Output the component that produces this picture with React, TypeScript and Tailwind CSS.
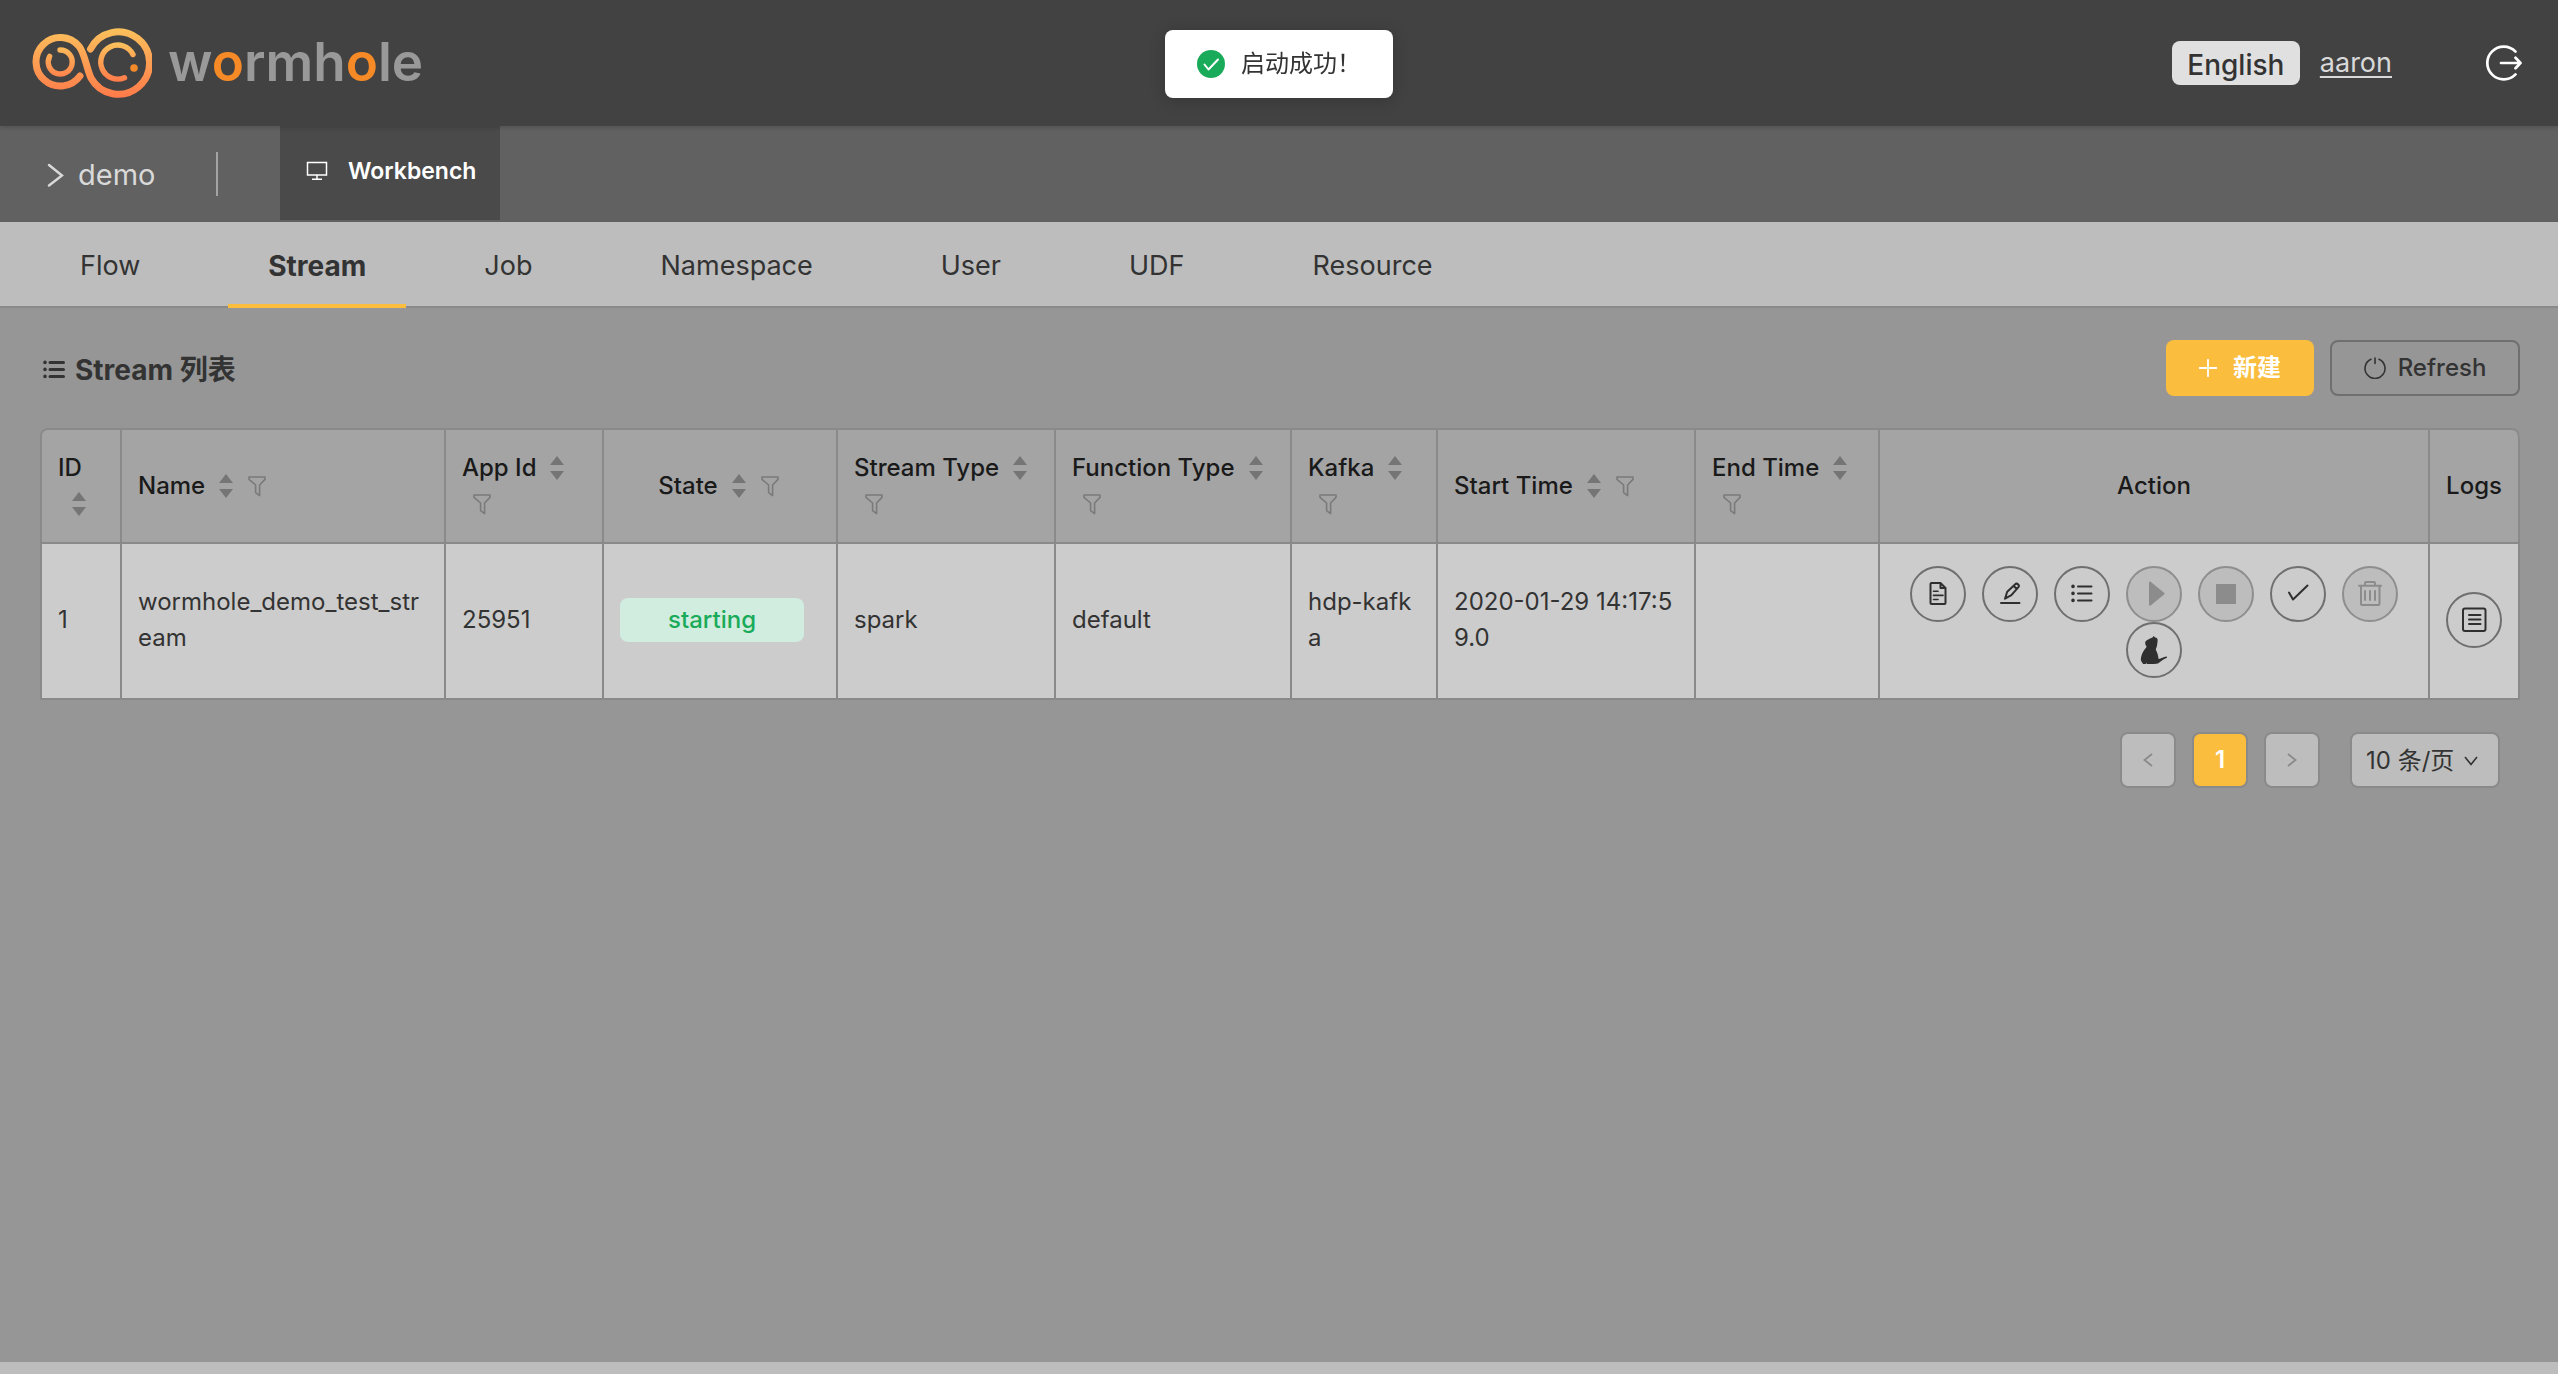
import { ReactNode } from "react";
import clsx from "clsx";

interface Column {
  title: string;
  width: string;
  sortable?: boolean;
  filterable?: boolean;
  center?: boolean;
}

const tabs = ["Flow", "Stream", "Job", "Namespace", "User", "UDF", "Resource"];

const columns: Column[] = [
  { title: "ID", width: "w-[80px]", sortable: true },
  { title: "Name", width: "w-[324px]", sortable: true, filterable: true },
  { title: "App Id", width: "w-[158px]", sortable: true, filterable: true },
  {
    title: "State",
    width: "w-[234px]",
    sortable: true,
    filterable: true,
    center: true,
  },
  { title: "Stream Type", width: "w-[218px]", sortable: true, filterable: true },
  {
    title: "Function Type",
    width: "w-[236px]",
    sortable: true,
    filterable: true,
  },
  { title: "Kafka", width: "w-[146px]", sortable: true, filterable: true },
  { title: "Start Time", width: "w-[258px]", sortable: true, filterable: true },
  { title: "End Time", width: "w-[184px]", sortable: true, filterable: true },
  { title: "Action", width: "", center: true },
  { title: "Logs", width: "w-[90px]", center: true },
];

function Logo() {
  return (
    <svg width="120" height="72" viewBox="32 26 120 72" fill="none" aria-hidden>
      <defs>
        <linearGradient
          id="ring"
          gradientUnits="userSpaceOnUse"
          x1="0"
          y1="28"
          x2="0"
          y2="96"
        >
          <stop offset="0" stopColor="#fbc15c" />
          <stop offset="1" stopColor="#ff7c4a" />
        </linearGradient>
        <linearGradient
          id="inner"
          gradientUnits="userSpaceOnUse"
          x1="0"
          y1="43"
          x2="0"
          y2="81"
        >
          <stop offset="0" stopColor="#fbc15c" />
          <stop offset="1" stopColor="#ff7c4a" />
        </linearGradient>
      </defs>
      <g strokeLinecap="round">
        <path
          d="M80 76A24.3 24.3 0 1 1 79 46.2C85 53.5 86 67 91 78A31.2 31.2 0 1 0 90.5 49"
          stroke="url(#ring)"
          strokeWidth="7"
        />
        <path
          d="M49.6 56.4A12 12 0 1 0 60 50"
          stroke="url(#inner)"
          strokeWidth="5.4"
        />
        <path
          d="M133 54.5A17 17 0 1 0 124.5 77.7"
          stroke="url(#inner)"
          strokeWidth="5.4"
        />
      </g>
      <circle cx="134" cy="68" r="3.8" fill="#f58a2a" />
    </svg>
  );
}

function SortIcon() {
  return (
    <svg width="14" height="24" viewBox="0 0 14 24" fill="#757575" aria-hidden>
      <path d="M7 0L14 9H0zM7 24L0 15h14z" />
    </svg>
  );
}

function FilterIcon() {
  return (
    <svg
      width="24"
      height="24"
      viewBox="0 0 24 24"
      fill="none"
      stroke="#7a7a7a"
      strokeWidth="1.6"
      strokeLinejoin="round"
      aria-hidden
    >
      <path d="M4 3h16v2.4L14.6 11v10.6L10.6 18.6V11L4 5.4z" />
    </svg>
  );
}

function ListIcon({ className }: { className?: string }) {
  return (
    <svg
      className={className}
      viewBox="0 0 28 28"
      fill="none"
      stroke="currentColor"
      strokeLinecap="round"
      aria-hidden
    >
      <path d="M10 6.4h13.5M10 13.4h13.5M10 20.4h13.5" />
      <path d="M5 6.4v.01M5 13.4v.01M5 20.4v.01" strokeWidth="3.6" />
    </svg>
  );
}

function StrokeIcon({ children }: { children: ReactNode }) {
  return (
    <svg
      width="28"
      height="28"
      viewBox="0 0 28 28"
      fill="none"
      stroke="currentColor"
      strokeWidth="2"
      strokeLinecap="round"
      strokeLinejoin="round"
      aria-hidden
    >
      {children}
    </svg>
  );
}

interface RoundButtonProps {
  label: string;
  disabled?: boolean;
  children: ReactNode;
}

function RoundButton({ label, disabled, children }: RoundButtonProps) {
  return (
    <button
      type="button"
      aria-label={label}
      disabled={disabled}
      className={clsx(
        "flex size-14 shrink-0 items-center justify-center rounded-full border-2",
        disabled
          ? "border-[#8e8e8e] bg-[#bdbdbd] text-[#8c8c8c]"
          : "border-[#6f6f6f] text-[#2f2f2f]"
      )}
    >
      {children}
    </button>
  );
}

function Actions() {
  return (
    <div className="flex flex-wrap justify-center gap-x-4 pt-1">
      <RoundButton label="Detail">
        <StrokeIcon>
          <path d="M16.5 3H7.5a1 1 0 0 0-1 1v19a1 1 0 0 0 1 1h13a1 1 0 0 0 1-1V8zM16.5 3v5h5" />
          <path d="M9.5 11.3H14M9.5 15.4h9.5M9.5 19.5H14" strokeWidth="1.6" />
        </StrokeIcon>
      </RoundButton>
      <RoundButton label="Edit">
        <StrokeIcon>
          <path d="M9 18.7l2.2-7L19 4.4c1-1 2.3-.8 3.2 0s.8 2 0 3L15.4 15.2zM17.7 6l3.2 3" />
          <path d="M5 23h18.5" />
        </StrokeIcon>
      </RoundButton>
      <RoundButton label="Topics">
        <ListIcon className="size-7 stroke-2" />
      </RoundButton>
      <RoundButton label="Start" disabled>
        <StrokeIcon>
          <path d="M10 2.6L23.5 13.6 10 24.6z" fill="currentColor" />
        </StrokeIcon>
      </RoundButton>
      <RoundButton label="Stop" disabled>
        <span className="size-5 bg-[#8c8c8c]" />
      </RoundButton>
      <RoundButton label="Renew">
        <StrokeIcon>
          <path d="M5 12.5l4 7L23.5 5.5" />
        </StrokeIcon>
      </RoundButton>
      <RoundButton label="Delete" disabled>
        <StrokeIcon>
          <path d="M3 5.7h22M9 5.5V3a1 1 0 0 1 1-1h8a1 1 0 0 1 1 1v2.5M5 6v18a1 1 0 0 0 1 1h16.500a1 1 0 0 0 1-1V6M9 11v9M14 11v9M19 11v9" />
        </StrokeIcon>
      </RoundButton>
      <RoundButton label="Cat">
        <svg
          width="28"
          height="28"
          viewBox="0 0 28 28"
          fill="currentColor"
          aria-hidden
        >
          <path d="M13.6 0l1.6 1.6c1.7.3 2.6 1.3 2.4 2.8-.1 2.6-.5 4-.8 6.2-.2 1.4-1.2 2-.9 3.4 1.5 2.5 2.3 5.5 2.7 9 2.6-.4 4.8-2.5 7.8-2.6.9.3.8 1.4 0 1.7-3 .9-5 3.500-8.400 5.300-3.400.8-7.300.8-10.800.8-.8-.4-.8-1.100-.2-1.700-.6.200-.9 1-1.400 1.700-.9.700-2.200.3-2.800-.6C1.300 25.400.6 24.300.9 22.600c.4-3.600 1.800-6.600 4-9.600.8-.9 1.200-1.400 1.700-2.300-.9-1.400-1.700-2.600-1.300-4.600.6-1.600 2.300-2.500 4.300-3.400 1.500-.6 2.600-.9 3.200-1.400z" />
        </svg>
      </RoundButton>
    </div>
  );
}

export default function App() {
  const td = "border-r-2 border-[#8a8a8a] px-4 pb-0.5 align-middle break-all";

  return (
    <div className="flex min-h-screen flex-col bg-[#969696] font-['Inter','Noto_Sans_CJK_SC',sans-serif] text-2xl leading-9 text-[#333]">
      <header className="relative z-10 flex h-[126px] items-center justify-between bg-[#424242] pr-9 pl-8 shadow-[0_2px_4px_rgba(0,0,0,0.15)]">
        <a href="#" className="flex items-center gap-4 pb-0.5">
          <Logo />
          <span className="text-[53px] leading-[72px] font-semibold text-[#999]">
            w<span className="text-[#f58a26]">o</span>rmh
            <span className="text-[#f58a26]">o</span>le
          </span>
        </a>
        <div className="flex items-center text-[28px]">
          <button
            type="button"
            className="h-11 w-32 rounded-lg bg-[#e0e0e0] pt-1 font-medium"
          >
            English
          </button>
          <a
            href="#"
            className="ml-5 text-[27px] text-[#d9d9d9] underline decoration-2 underline-offset-4"
          >
            aaron
          </a>
          <button type="button" aria-label="Logout" className="ml-[94px]">
            <svg
              width="36"
              height="36"
              viewBox="0 0 36 36"
              fill="none"
              stroke="#fff"
              strokeWidth="2.7"
              strokeLinecap="round"
              strokeLinejoin="round"
              aria-hidden
            >
              <path d="M29.5 6.6A16.4 16.4 0 1 0 29.5 29.4M15 18h19.5M29.5 12.8l5 5.2-5 5.2" />
            </svg>
          </button>
        </div>
      </header>

      <div className="flex h-24 items-start bg-[#616161]">
        <div className="flex h-24 w-[216px] items-center pt-0.5 pl-[46px] text-[#d9d9d9]">
          <svg
            width="18"
            height="24"
            viewBox="0 0 18 24"
            fill="none"
            stroke="currentColor"
            strokeWidth="2.4"
            strokeLinecap="round"
            aria-hidden
          >
            <path d="M3 2l13 10.5L3 22.5" />
          </svg>
          <span className="ml-3.5 text-[29px]">demo</span>
        </div>
        <div className="h-11 w-0.5 self-center bg-[#a3a3a3]" />
        <a
          href="#"
          className="ml-[62px] flex h-[94px] items-center bg-[#4a4a4a] pr-6 pb-1 pl-[26px] font-semibold text-white"
        >
          <svg
            width="22"
            height="20"
            viewBox="0 0 22 20"
            fill="none"
            stroke="currentColor"
            strokeWidth="1.5"
            aria-hidden
          >
            <path d="M1.5 1.5h19v12.5h-19zM11 14v4M6 18.3h10" />
          </svg>
          <span className="ml-5 text-[23px]">Workbench</span>
        </a>
      </div>

      <nav className="flex h-[86px] items-stretch gap-12 border-b-2 border-[#8a8a8a] bg-[#bdbdbd] px-10 text-[27px]">
        {tabs.map((tab) => (
          <a
            key={tab}
            href="#"
            className={clsx(
              "-mb-0.5 flex items-center border-b-4 px-10 pt-1.5",
              tab === "Stream"
                ? "-mr-2.5 border-[#fabd3e] text-[28px] font-bold"
                : "border-transparent"
            )}
          >
            {tab}
          </a>
        ))}
      </nav>

      <main className="flex-1 pt-8 pr-[38px] pl-10">
        <div className="mb-8 flex items-center justify-between">
          <h1 className="flex items-center gap-[7px] pt-1 text-[28px] font-bold">
            <ListIcon className="size-7 stroke-[3]" />
            Stream 列表
          </h1>
          <div className="flex gap-4">
            <button
              type="button"
              className="flex h-14 w-[148px] items-center justify-center gap-4 rounded-lg bg-[#fabd3e] font-bold text-white"
            >
              <svg
                width="18"
                height="18"
                viewBox="0 0 18 18"
                stroke="currentColor"
                strokeWidth="1.8"
                aria-hidden
              >
                <path d="M9 0v18M0 9h18" />
              </svg>
              新建
            </button>
            <button
              type="button"
              className="flex h-14 w-[190px] items-center justify-center gap-3 rounded-lg border-2 border-[#6f6f6f] font-medium"
            >
              <svg
                width="22"
                height="22"
                viewBox="0 0 22 22"
                fill="none"
                stroke="currentColor"
                strokeWidth="1.6"
                strokeLinecap="round"
                aria-hidden
              >
                <path d="M11 1v5.5M7 2.3a10 10 0 1 0 8 0" />
              </svg>
              Refresh
            </button>
          </div>
        </div>

        <table className="w-full table-fixed border-separate border-spacing-0 overflow-hidden rounded-t-lg border-t-2 border-l-2 border-[#8a8a8a]">
          <thead>
            <tr className="h-[114px] bg-[#a4a4a4] text-[#1a1a1a]">
              {columns.map((col) => (
                <th
                  key={col.title}
                  scope="col"
                  className={clsx(
                    "border-r-2 border-b-2 border-[#8a8a8a] px-4 align-middle font-medium last:rounded-tr-lg",
                    col.width
                  )}
                >
                  <div
                    className={clsx(
                      "flex flex-wrap items-center",
                      col.center && "justify-center"
                    )}
                  >
                    <span className="whitespace-nowrap">{col.title}</span>
                    {col.sortable && (
                      <button
                        type="button"
                        aria-label={`Sort by ${col.title}`}
                        className="flex h-9 items-center pr-1 pl-3.5"
                      >
                        <SortIcon />
                      </button>
                    )}
                    {col.filterable && (
                      <button
                        type="button"
                        aria-label={`Filter ${col.title}`}
                        className="flex h-9 items-center pl-2"
                      >
                        <FilterIcon />
                      </button>
                    )}
                  </div>
                </th>
              ))}
            </tr>
          </thead>
          <tbody>
            <tr className="h-[156px] bg-[#ccc] *:border-b-2">
              <td className={td}>1</td>
              <td className={td}>wormhole_demo_test_stream</td>
              <td className={td}>25951</td>
              <td className={td}>
                <span className="flex h-11 w-[184px] items-center justify-center rounded-lg bg-[#d0ede0] font-medium text-[#1aab5a]">
                  starting
                </span>
              </td>
              <td className={td}>spark</td>
              <td className={td}>default</td>
              <td className={td}>hdp-kafka</td>
              <td className={td}>2020-01-29 14:17:59.0</td>
              <td className={td}></td>
              <td className={td}>
                <Actions />
              </td>
              <td className={td}>
                <RoundButton label="Logs">
                  <StrokeIcon>
                    <rect x="3" y="2.5" width="22.5" height="22.5" rx="2" />
                    <path d="M9 9h11.5M9 13.5h11.5M9 18h11.5" />
                  </StrokeIcon>
                </RoundButton>
              </td>
            </tr>
          </tbody>
        </table>

        <div className="mt-8 flex justify-end gap-4 pr-5">
          <button
            type="button"
            aria-label="Previous page"
            disabled
            className="flex size-14 items-center justify-center rounded-lg border-2 border-[#8a8a8a] bg-[#bdbdbd] text-[#8a8a8a]"
          >
            <svg
              width="10"
              height="14"
              viewBox="0 0 10 14"
              fill="none"
              stroke="currentColor"
              strokeWidth="1.8"
              aria-hidden
            >
              <path d="M9 1L1.5 7 9 13" />
            </svg>
          </button>
          <button
            type="button"
            className="size-14 rounded-lg border-2 border-[#8a8a8a] bg-[#fabd3e] font-semibold text-white"
          >
            1
          </button>
          <button
            type="button"
            aria-label="Next page"
            disabled
            className="flex size-14 items-center justify-center rounded-lg border-2 border-[#8a8a8a] bg-[#bdbdbd] text-[#8a8a8a]"
          >
            <svg
              width="10"
              height="14"
              viewBox="0 0 10 14"
              fill="none"
              stroke="currentColor"
              strokeWidth="1.8"
              aria-hidden
            >
              <path d="M1 1l7.5 6L1 13" />
            </svg>
          </button>
          <div className="relative ml-3.5">
            <select
              aria-label="Page size"
              className="h-14 w-[150px] appearance-none rounded-lg border-2 border-[#8a8a8a] bg-[#bdbdbd] pt-0.5 pl-3.5"
            >
              <option>10 条/页</option>
              <option>20 条/页</option>
              <option>50 条/页</option>
            </select>
            <svg
              className="pointer-events-none absolute top-6 right-[22px]"
              width="14"
              height="10"
              viewBox="0 0 14 10"
              fill="none"
              stroke="currentColor"
              strokeWidth="1.6"
              aria-hidden
            >
              <path d="M1 1l6 7.5L13 1" />
            </svg>
          </div>
        </div>
      </main>

      <footer className="h-3 bg-[#bdbdbd]" />

      <div
        role="status"
        className="fixed top-[30px] left-1/2 z-20 flex h-[68px] -translate-x-1/2 items-center gap-4 rounded-lg bg-white px-8 shadow-[0_2px_16px_rgba(0,0,0,0.2)]"
      >
        <svg width="28" height="28" viewBox="0 0 28 28" fill="none" aria-hidden>
          <circle cx="14" cy="14" r="14" fill="#1aab5a" />
          <path
            d="M7.5 14.5l4 5L21 9.5"
            stroke="#fff"
            strokeWidth="2"
            strokeLinecap="round"
            strokeLinejoin="round"
          />
        </svg>
        启动成功！
      </div>
    </div>
  );
}
